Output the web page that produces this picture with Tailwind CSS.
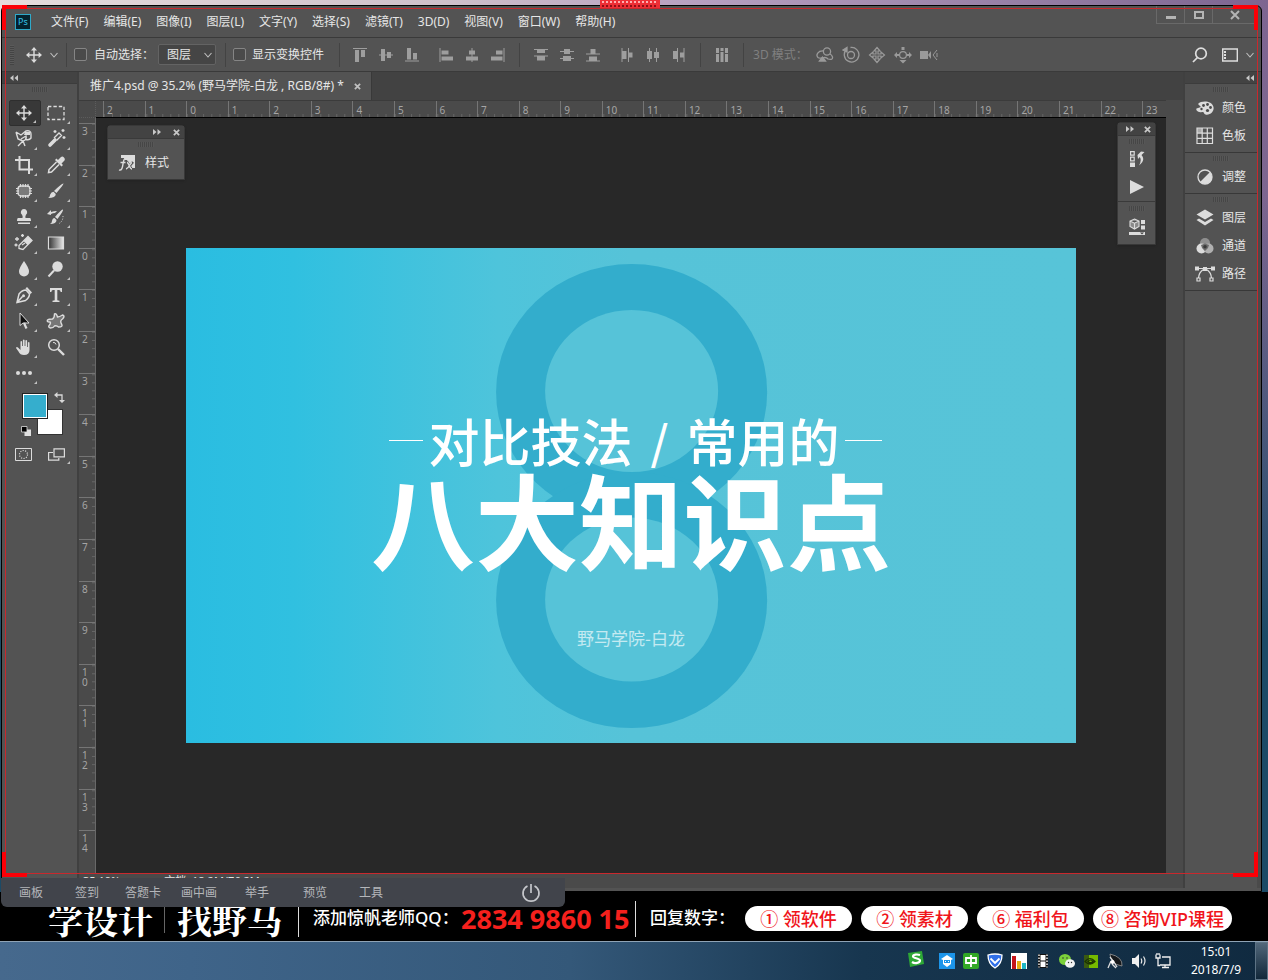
<!DOCTYPE html>
<html lang="zh-CN">
<head>
<meta charset="utf-8">
<meta name="viewport" content="width=device-width, initial-scale=1">
<title>推广4.psd</title>
<script src="https://cdn.jsdelivr.net/npm/@tailwindcss/browser@4"></script>
</head>
<body class="relative flex h-screen flex-col overflow-hidden bg-[linear-gradient(180deg,transparent_20%,#1b4a66_65%),linear-gradient(90deg,#e6dcdc_0%,#cfc0ca_35%,#b7a0c0_55%,#7d6590_100%)] font-['Noto_Sans','Noto_Sans_CJK_SC',sans-serif] text-xs text-[#e6e6e6]">

<svg class="hidden" aria-hidden="true">
  <symbol id="move" viewBox="0 0 16 16"><path fill="none" stroke="currentColor" stroke-width="1.4" d="M8 2v12M2 8h12"/><path fill="currentColor" d="M8 0l3 3.4H5zM8 16l3-3.4H5zM0 8l3.4-3v6zM16 8l-3.4-3v6z"/></symbol>
  <symbol id="chev" viewBox="0 0 8 8"><path fill="none" stroke="currentColor" stroke-width="1.1" d="M.5 2L4 6l3.500-4"/></symbol>
  <symbol id="left2" viewBox="0 0 8 6"><path fill="currentColor" d="M3.500 0v6L0 3zM8 0v6L4.500 3z"/></symbol>
  <symbol id="right2" viewBox="0 0 8 6"><path fill="currentColor" d="M0 0v6l3.500-3zM4.500 0v6L8 3z"/></symbol>
  <symbol id="x" viewBox="0 0 8 8"><path fill="none" stroke="currentColor" stroke-width="2" d="M1 1l6 6M7 1L1 7"/></symbol>
</svg>

<div class="h-[5px] shrink-0"></div>

<!-- Application window -->
<main class="mx-px mr-[6px] flex min-h-0 flex-1 flex-col rounded-t-md border border-black bg-[#535353] pb-[3px]">
  <header class="relative flex h-8 shrink-0 items-center border-b border-[#3a3a3a] pl-[13px]">
    <div class="flex h-4 w-4 items-center justify-center border border-[#2fa9c9] bg-[#04222f] text-[9px] leading-none text-[#35c3ea]">Ps</div>
    <nav class="ml-5 flex gap-[15px]">
      <button>文件(F)</button><button>编辑(E)</button><button>图像(I)</button><button>图层(L)</button><button>文字(Y)</button><button>选择(S)</button><button>滤镜(T)</button><button>3D(D)</button><button>视图(V)</button><button>窗口(W)</button><button>帮助(H)</button>
    </nav>
    <div class="ml-auto mr-1 flex h-[18px] self-start border-b border-l border-[#696969] text-[#b4b4b4]">
      <button aria-label="最小化" class="flex w-7 items-center justify-center border-r border-[#696969]"><svg class="h-3 w-3" viewBox="0 0 12 12"><path fill="currentColor" d="M1 7h10v3H1z"/></svg></button>
      <button aria-label="最大化" class="flex w-7 items-center justify-center border-r border-[#696969]"><svg class="h-3 w-3" viewBox="0 0 12 12"><path fill="none" stroke="currentColor" stroke-width="2" d="M2 3h8v6H2z"/></svg></button>
      <button aria-label="关闭" class="flex w-11 items-center justify-center"><svg class="h-3 w-3" viewBox="0 0 12 12"><path fill="none" stroke="currentColor" stroke-width="2" d="M2 2l8 8M10 2l-8 8"/></svg></button>
    </div>
  </header>

  <section class="flex h-[34px] shrink-0 items-center border-b border-[#3a3a3a]">
    <div class="ml-2 h-5 w-1 bg-[repeating-linear-gradient(0deg,#444_0_1px,#5a5a5a_1px_2px)]"></div>
    <svg class="ml-3 h-4 w-4 text-[#dcdcdc]"><use href="#move"/></svg>
    <svg class="ml-2 h-2 w-2 text-[#c0c0c0]"><use href="#chev"/></svg>
    <div class="ml-2 h-6 w-px bg-[#434343]"></div>
    <label class="ml-[7px] flex items-center"><input type="checkbox" class="mr-[7px] h-[13px] w-[13px] appearance-none rounded-xs border border-[#858585] bg-[#4a4a4a]">自动选择：</label>
    <label class="relative ml-1 flex items-center"><span class="sr-only">选择类型</span>
      <select class="h-[21px] w-[58px] appearance-none rounded-xs border border-[#636363] bg-[#454545] pl-2 leading-[19px]"><option>图层</option></select>
      <svg class="pointer-events-none absolute right-1 h-2 w-2 text-[#c0c0c0]"><use href="#chev"/></svg></label>
    <div class="ml-[9px] h-6 w-px bg-[#434343]"></div>
    <label class="ml-[7px] flex items-center"><input type="checkbox" class="mr-[6px] h-[13px] w-[13px] appearance-none rounded-xs border border-[#858585] bg-[#4a4a4a]">显示变换控件</label>
    <div class="ml-[15px] h-6 w-px bg-[#434343]"></div>

    <div class="ml-[7px] flex text-[#9e9e9e]">
      <button aria-label="顶对齐" class="flex w-[26px] justify-center"><svg class="h-[14px] w-[14px]" viewBox="0 0 14 14" fill="currentColor"><path d="M0 0h14v1H0zM2 2h4v12H2zM8 2h4v7H8z"/></svg></button>
      <button aria-label="垂直居中对齐" class="flex w-[26px] justify-center"><svg class="h-[14px] w-[14px]" viewBox="0 0 14 14" fill="currentColor"><path d="M0 6.500h14v1H0zM2 1h4v12H2zM8 4h4v6H8z"/></svg></button>
      <button aria-label="底对齐" class="flex w-[26px] justify-center"><svg class="h-[14px] w-[14px]" viewBox="0 0 14 14" fill="currentColor"><path d="M0 12.500h14v1H0zM2 0h4v11.500H2zM8 5h4v6.500H8z"/></svg></button>
    </div>
    <div class="ml-2 flex text-[#9e9e9e]">
      <button aria-label="左对齐" class="flex w-[26px] justify-center"><svg class="h-[14px] w-[14px]" viewBox="0 0 14 14" fill="currentColor"><path d="M.5 0h1v14h-1zM2.500 2.500h7v4h-7zM2.500 8.500H14v4H2.500z"/></svg></button>
      <button aria-label="水平居中对齐" class="flex w-[26px] justify-center"><svg class="h-[14px] w-[14px]" viewBox="0 0 14 14" fill="currentColor"><path d="M6.500 0h1v14h-1zM4 2.500h6v4H4zM1 8.500h12v4H1z"/></svg></button>
      <button aria-label="右对齐" class="flex w-[26px] justify-center"><svg class="h-[14px] w-[14px]" viewBox="0 0 14 14" fill="currentColor"><path d="M12.500 0h1v14h-1zM5 2.500h6.500v4H5zM0 8.500h11.500v4H0z"/></svg></button>
    </div>
    <div class="ml-2 h-6 w-px bg-[#434343]"></div>
    <div class="ml-2 flex text-[#9e9e9e]">
      <button aria-label="按顶分布" class="flex w-[26px] justify-center"><svg class="h-[14px] w-[14px]" viewBox="0 0 14 14" fill="currentColor"><path d="M0 1h14v1H0zM3 2h8v3H3zM0 7.500h14v1H0zM3 8.500h8v4H3z"/></svg></button>
      <button aria-label="垂直居中分布" class="flex w-[26px] justify-center"><svg class="h-[14px] w-[14px]" viewBox="0 0 14 14" fill="currentColor"><path d="M0 3h14v1H0zM4 1h6v5H4zM0 10h14v1H0zM3 8h8v5H3z"/></svg></button>
      <button aria-label="按底分布" class="flex w-[26px] justify-center"><svg class="h-[14px] w-[14px]" viewBox="0 0 14 14" fill="currentColor"><path d="M0 5.500h14v1H0zM4.500 1h5v4.500h-5zM0 12.500h14v1H0zM3 8.500h8v4H3z"/></svg></button>
    </div>
    <div class="ml-2 flex text-[#9e9e9e]">
      <button aria-label="按左分布" class="flex w-[26px] justify-center"><svg class="h-[14px] w-[14px]" viewBox="0 0 14 14" fill="currentColor"><path d="M1.500 0h1v14h-1zM2.500 3h4v8h-4zM8 0h1v14H8zM9 4.500h3.500v5H9z"/></svg></button>
      <button aria-label="水平居中分布" class="flex w-[26px] justify-center"><svg class="h-[14px] w-[14px]" viewBox="0 0 14 14" fill="currentColor"><path d="M3 0h1v14H3zM1 3h5v8H1zM10 0h1v14h-1zM8 4h5v6H8z"/></svg></button>
      <button aria-label="按右分布" class="flex w-[26px] justify-center"><svg class="h-[14px] w-[14px]" viewBox="0 0 14 14" fill="currentColor"><path d="M5 0h1v14H5zM1 3h4v8H1zM11.500 0h1v14h-1zM8 4.500h3.500v5H8z"/></svg></button>
    </div>
    <div class="ml-2 h-6 w-px bg-[#434343]"></div>
    <button aria-label="自动对齐图层" class="ml-2 flex w-[26px] justify-center text-[#9e9e9e]"><svg class="h-[14px] w-[14px]" viewBox="0 0 14 14" fill="currentColor"><path d="M1 0h3v5H1zM1 6h3v8H1zM5.500 0h3v3h-3zM5.500 4h3v10h-3zM10 0h3v5h-3zM10 6h3v8h-3z"/></svg></button>
    <div class="ml-2 h-6 w-px bg-[#434343]"></div>
    <span class="ml-[9px] w-[59px] whitespace-nowrap text-[#808080]">3D 模式：</span>
    <div class="flex text-[#9a9a9a]">
      <button aria-label="环绕移动 3D 相机" class="flex w-[26px] justify-center"><svg class="h-[18px] w-[18px]" viewBox="0 0 18 18" fill="none" stroke="currentColor" stroke-width="1.300"><circle cx="11" cy="5.500" r="3.600"/><path d="M7.500 5C2 4.500-.5 9 2 11.500 5 14 9 9 12 13q5 1.500 4.500-2Q16 9 14 8"/><path fill="currentColor" d="M3.500 15l3-4 3 4z"/></svg></button>
      <button aria-label="滚动 3D 相机" class="flex w-[26px] justify-center"><svg class="h-[18px] w-[18px]" viewBox="0 0 18 18" fill="none" stroke="currentColor" stroke-width="1.300"><circle cx="9" cy="9" r="3.500"/><path d="M4.500 3.500a7.300 7.300 0 1 0 4-2"/><path fill="currentColor" d="M1 4l4-2.500V6z"/></svg></button>
      <button aria-label="平移 3D 相机" class="flex w-[26px] justify-center"><svg class="h-[18px] w-[18px]" viewBox="0 0 18 18" fill="none" stroke="currentColor" stroke-width="1.200"><path d="M9 1.500L12 5h-2v3h3V6l3.500 3-3.500 3v-2h-3v3h2l-3 3.500L6 13h2v-3H5v2L1.500 9 5 6v2h3V5H6z"/></svg></button>
      <button aria-label="滑动 3D 相机" class="flex w-[26px] justify-center"><svg class="h-[18px] w-[18px]" viewBox="0 0 18 18" fill="none" stroke="currentColor" stroke-width="1.200"><circle cx="9" cy="9" r="3.400"/><path fill="currentColor" stroke="none" d="M7.500 1h3v3h-3zM9 17.500L5.500 14h7zM0 9l3-3v2h2.500v2H3v2zM18 9l-3-3v2h-2.500v2H15v2z"/></svg></button>
      <button aria-label="变焦 3D 相机" class="flex w-[26px] justify-center"><svg class="h-[18px] w-[18px]" viewBox="0 0 18 18"><path fill="currentColor" d="M0 5h8v8H0zM8 9l3-4v8z"/><path fill="none" stroke="currentColor" d="M17 4l-4 5 4 5M17 7v4"/></svg></button>
    </div>
    <div class="ml-auto flex items-center text-[#dedede]">
      <button aria-label="搜索"><svg class="h-4 w-4" viewBox="0 0 16 16" fill="none" stroke="currentColor" stroke-width="1.700"><circle cx="9" cy="6.500" r="5.300"/><path d="M5.500 10.500L1 15"/></svg></button>
      <button aria-label="工作区" class="ml-[14px]"><svg class="h-4 w-4" viewBox="0 0 16 16"><path fill="none" stroke="currentColor" stroke-width="1.400" d="M.7 2h14.600v12H.7z"/><path fill="currentColor" d="M2 4h2v2H2zM2 7h2v2H2zM2 10h2v2H2z"/></svg></button>
      <svg class="ml-2 mr-[7px] h-2 w-2 text-[#c0c0c0]"><use href="#chev"/></svg>
    </div>
  </section>

  <div class="flex min-h-0 flex-1">
    <!-- Tools -->
    <aside class="flex w-[75px] shrink-0 flex-col">
      <div class="flex h-3 shrink-0 items-center border-b border-[#3c3c3c] bg-[#434343] pl-2 text-[#c8c8c8]"><svg class="h-[6px] w-2"><use href="#left2"/></svg></div>
      <div class="flex h-4 shrink-0 justify-center pt-[3px]"><div class="h-[5px] w-4 bg-[repeating-linear-gradient(90deg,#464646_0_1px,#575757_1px_2px)]"></div></div>
      <div id="tools" class="grid grid-cols-[32px_33px] pl-[7px] text-[#dcdcdc]"></div>
      <div class="relative h-[58px]">
        <div class="absolute left-[35px] top-[23px] h-[26px] w-[26px] border border-[#333] bg-white"></div>
        <div class="absolute left-5 top-[7px] h-[26px] w-[26px] border border-[#222] bg-[#35aecd] outline-1 -outline-offset-2 outline-white"></div>
        <svg class="absolute left-[52px] top-[6px] h-[11px] w-[11px]" viewBox="0 0 11 11"><path fill="none" stroke="#d8d8d8" stroke-width="1.300" d="M2 3h6v6"/><path fill="#d8d8d8" d="M0 3l3.500-3v6zM8 11L5 8h6z"/></svg>
        <svg class="absolute left-[19px] top-[40px] h-[10px] w-[10px]" viewBox="0 0 10 10"><path fill="#e0e0e0" d="M3.500 3.500H10V10H3.500z"/><path fill="#000" stroke="#ddd" stroke-width=".8" d="M.5 .5h5.500v5.500H.5z"/></svg>
      </div>
      <div class="grid grid-cols-[32px_33px] pl-[7px] text-[#dcdcdc]">
        <button aria-label="快速蒙版" class="flex h-5 items-center pl-[6px]"><svg class="h-[13px] w-[17px]" viewBox="0 0 17 13" fill="none" stroke="currentColor"><path d="M.5 .5h16v12H.5z"/><circle cx="8.500" cy="6.500" r="4" stroke-dasharray="1.100 1.400" stroke-width="1.200"/></svg></button>
        <button aria-label="屏幕模式" class="relative flex h-5 items-center pl-[7px]"><svg class="h-[13px] w-[17px]" viewBox="0 0 17 13" fill="none" stroke="currentColor" stroke-width="1.200"><path d="M6 .8h10.400v8H6zM5 4.500H.6v7.700h10.200V10"/></svg><span class="absolute bottom-0 right-1 h-[3px] w-[3px] bg-[#c0c0c0] [clip-path:polygon(100%_0,100%_100%,0_100%)]"></span></button>
      </div>
    </aside>

    <!-- Document -->
    <section class="flex min-w-0 flex-1 flex-col border-x-2 border-[#404040]">
      <div class="flex h-7 shrink-0 bg-[#424242]">
        <div class="flex items-center border-r border-[#393939] bg-[#535353] pl-[11px] pr-[10px]">推广4.psd @ 35.2% (野马学院-白龙 , RGB/8#) *<button aria-label="关闭文档" class="ml-[10px] text-[#c0c0c0]"><svg class="h-[7px] w-[7px]"><use href="#x"/></svg></button></div>
      </div>
      <div class="flex min-h-0 flex-1">
        <div class="flex min-w-0 flex-1 flex-col">
          <div class="flex h-[18px] shrink-0 border-t border-[#3b3b3b] bg-[#4a4a4a] text-[10px] text-[#a5a5a5]">
            <div class="w-[17px] shrink-0 border-b border-r border-dotted border-[#5c5c5c]"></div>
            <div id="hruler" class="flex min-w-0 flex-1 border-b border-black pl-[7px]"></div>
          </div>
          <div class="flex min-h-0 flex-1">
            <div id="vruler" class="flex w-[17px] shrink-0 flex-col overflow-hidden border-r border-[#686868] bg-[#4a4a4a] pt-[5px] text-[10px] text-[#a5a5a5]"></div>
            <div class="relative flex min-w-0 flex-1 items-center justify-center bg-[#282828]">
              <!-- Artboard -->
              <div class="relative flex aspect-[890/494] w-[83.2%] flex-col items-center bg-[linear-gradient(90deg,#2abde1_0%,#30c0e0_12%,#4ec4db_35%,#56c3d8_50%,#57c4d8_100%)] text-white">
                <svg class="absolute inset-0 h-full w-full" viewBox="0 0 890 494">
                  <g fill="#33adcc"><ellipse cx="445.500" cy="144" rx="135.500" ry="128"/><ellipse cx="445.500" cy="352" rx="135.500" ry="128"/></g>
                  <g fill="#56c3d8"><ellipse cx="445.500" cy="143" rx="86.500" ry="81"/><ellipse cx="445.500" cy="351.500" rx="86.500" ry="82"/></g>
                </svg>
                <div class="relative mt-[162px] flex h-[60px] items-center pl-[9px] text-[51px] leading-none font-medium font-['Noto_Sans_CJK_SC',sans-serif]">
                  <span class="mr-[6px] h-px w-[34px] bg-white"></span><span>对比技法</span><span class="mx-[18px] text-[46px]">/</span><span>常用的</span><span class="ml-[6px] h-px w-[37px] bg-white"></span>
                </div>
                <h1 class="relative whitespace-nowrap text-[104px] leading-[96px] font-bold font-['Noto_Sans_CJK_SC',sans-serif]">八大知识点</h1>
                <p class="relative mt-[60px] text-[17px] leading-6 text-white/65 font-['Noto_Sans_CJK_SC',sans-serif]">野马学院-白龙</p>
              </div>

              <div class="absolute left-[11px] top-[7px] w-[78px] rounded-t border border-[#383838] bg-[#535353] shadow">
                <div class="flex h-[13px] items-center justify-end gap-3 border-b border-[#3a3a3a] bg-[#434343] pr-1 text-[#c8c8c8]"><svg class="h-[6px] w-2"><use href="#right2"/></svg><button aria-label="关闭样式"><svg class="h-[7px] w-[7px]"><use href="#x"/></svg></button></div>
                <div class="flex justify-center pt-[3px]"><div class="h-[5px] w-4 bg-[repeating-linear-gradient(90deg,#464646_0_1px,#575757_1px_2px)]"></div></div>
                <button class="flex h-8 w-full items-center gap-[9px] pl-[10px]"><svg class="h-[18px] w-[18px]" viewBox="0 0 18 18"><path fill="#dcdcdc" d="M3 1h14v13h-3l-3-4-2-4H7L6 4H3z"/><path fill="none" stroke="#535353" stroke-width="2.600" d="M9 8l5 8M15 8l-7 8"/><path fill="none" stroke="#dcdcdc" stroke-width="1.400" d="M8.500 5C6 3.500 5.500 7 5 10s-1 7-4 6M2.500 8.500h5M9 8.500c2 0 2.500 6.500 5 6.500M14 8.500c-2 .5-3 6-6 6.500"/></svg>样式</button>
              </div>

              <div class="absolute right-[10px] top-1 w-[39px] rounded-t border border-[#383838] bg-[#535353] text-[#dcdcdc] shadow">
                <div class="flex h-[13px] items-center justify-end gap-[10px] border-b border-[#3a3a3a] bg-[#434343] pr-1 text-[#c8c8c8]"><svg class="h-[6px] w-2"><use href="#right2"/></svg><button aria-label="关闭面板"><svg class="h-[7px] w-[7px]"><use href="#x"/></svg></button></div>
                <div class="flex h-[9px] justify-center pt-[3px]"><div class="h-[5px] w-4 bg-[repeating-linear-gradient(90deg,#464646_0_1px,#575757_1px_2px)]"></div></div>
                <button aria-label="历史记录" class="flex h-7 w-full items-center justify-center"><svg class="h-[18px] w-4" viewBox="0 0 16 18"><path fill="none" stroke="currentColor" stroke-width="1.200" d="M1.600 1.600h3.600v3.600H1.600zM1.600 7.200h3.600v3.600H1.600z"/><path fill="currentColor" d="M1 12.500h5V17H1zM8.500 5L12 1.500 15.500 2 14 3.500 12.500 5q4.500 5-2.500 10.500Q13 10 10.800 7L9 9z"/></svg></button>
                <button aria-label="动作" class="flex h-7 w-full items-center justify-center"><svg class="h-[14px] w-[14px]" viewBox="0 0 14 14"><path fill="currentColor" d="M0 0l14 7-14 7z"/></svg></button>
                <div class="flex h-[13px] justify-center border-t border-[#3a3a3a] pt-1"><div class="h-[5px] w-4 bg-[repeating-linear-gradient(90deg,#464646_0_1px,#575757_1px_2px)]"></div></div>
                <button aria-label="属性" class="flex h-[30px] w-full items-center justify-center pb-1"><svg class="h-[18px] w-4" viewBox="0 0 16 18"><path fill="#8a8a8a" stroke="currentColor" stroke-width="1.100" d="M5.500 1L10 3v5.500l-4.500 2.500L1 8.500V3zM1 3l4.500 2.200L10 3M5.500 5.200V11"/><path fill="currentColor" d="M12 2h4v4h-4zM12 7.500h4v4h-4zM0 14h16v3H0z"/><path fill="#444" d="M11 14.500h4l-2 2z"/></svg></button>
              </div>
            </div>
          </div>
          <div class="flex h-[15px] shrink-0 gap-[44px] overflow-hidden bg-[#4a4a4a] pl-1 text-[11px] leading-4"><span>35.19%</span><span>文档: 18.2M/76.2M</span></div>
        </div>
        <div class="w-[17px] shrink-0 bg-[#4a4a4a]"></div>
      </div>
    </section>

    <!-- Collapsed panels -->
    <aside class="flex w-[76px] shrink-0 flex-col border-r-4 border-[#4a4a4a]">
      <div class="flex h-3 shrink-0 items-center justify-end border-b border-[#3c3c3c] bg-[#434343] pr-[3px] text-[#c8c8c8]"><svg class="h-[6px] w-2"><use href="#left2"/></svg></div>
      <div class="flex flex-col border-b border-[#383838] pb-[2px]">
        <div class="flex h-[10px] justify-center pt-[3px]"><div class="h-[5px] w-4 bg-[repeating-linear-gradient(90deg,#464646_0_1px,#575757_1px_2px)]"></div></div>
        <button class="flex h-7 items-center gap-[7px] pl-[10px]"><svg class="h-5 w-5" viewBox="0 0 20 20"><path fill="#dcdcdc" d="M3 6c4-4 14-3 15.500 3 1 5-4 8.500-8 7.500-2-.5-1-3-3.500-2.500-4 1-6.500-2-5.500-3.500L6 9z"/><g fill="#4a4a4a"><circle cx="8.500" cy="7.500" r="1.400"/><circle cx="12.500" cy="6.500" r="1.400"/><circle cx="15.500" cy="9.500" r="1.400"/><circle cx="12.500" cy="12.500" r="1.600"/><circle cx="6.500" cy="11" r="1.200"/></g></svg>颜色</button>
        <button class="flex h-7 items-center gap-[7px] pl-[10px]"><svg class="h-5 w-5" viewBox="0 0 20 20"><path fill="#aaa" d="M2 2h5v5H2z"/><path fill="none" stroke="#dcdcdc" stroke-width="1.200" d="M2 2h15.500v15.500H2zM7.200 2v15.500M12.300 2v15.500M2 7.200h15.500M2 12.300h15.500"/></svg>色板</button>
      </div>
      <div class="flex flex-col border-b border-[#383838] pb-[2px]">
        <div class="flex h-[10px] justify-center pt-[3px]"><div class="h-[5px] w-4 bg-[repeating-linear-gradient(90deg,#464646_0_1px,#575757_1px_2px)]"></div></div>
        <button class="flex h-7 items-center gap-[7px] pl-[10px]"><svg class="h-5 w-5" viewBox="0 0 20 20"><circle cx="10" cy="10" r="7" fill="none" stroke="#dcdcdc" stroke-width="1.300"/><path fill="#dcdcdc" d="M15 5a7 7 0 0 1-10 10z"/></svg>调整</button>
      </div>
      <div class="flex flex-col border-b border-[#383838] pb-[2px]">
        <div class="flex h-[10px] justify-center pt-[3px]"><div class="h-[5px] w-4 bg-[repeating-linear-gradient(90deg,#464646_0_1px,#575757_1px_2px)]"></div></div>
        <button class="flex h-7 items-center gap-[7px] pl-[10px]"><svg class="h-5 w-5" viewBox="0 0 20 20" fill="#dcdcdc"><path d="M10 1.500l8.500 5-8.500 5-8.500-5zM4 10.500l6 3.500 6-3.500 2.500 1.500-8.500 5.500L1.500 12z"/></svg>图层</button>
        <button class="flex h-7 items-center gap-[7px] pl-[10px]"><svg class="h-5 w-5" viewBox="0 0 20 20"><circle cx="10" cy="7" r="5" fill="#8f8f8f"/><circle cx="6.500" cy="12.500" r="5" fill="#dcdcdc"/><circle cx="13.500" cy="12.500" r="5" fill="#b0b0b0"/><path fill="#6c6c6c" d="M6 9l4-1.500L14 9l-1 3-3 3-3-3z"/><circle cx="10" cy="10.800" r="1.800" fill="#3a3a3a"/></svg>通道</button>
        <button class="flex h-7 items-center gap-[7px] pl-[10px]"><svg class="h-5 w-5" viewBox="0 0 20 20"><path fill="none" stroke="#dcdcdc" stroke-width="1.200" d="M1 4.500h18M8.500 5.500Q4 8 3.500 14M11.500 5.500Q16 8 16.500 14M2 14h3v3H2zM15 14h3v3h-3z"/><path fill="#dcdcdc" d="M0 2.500h4v4H0zM16 2.500h4v4h-4zM8 3h4v4H8z"/></svg>路径</button>
      </div>
    </aside>
  </div>
</main>

<!-- Advertising banner -->
<section class="relative flex h-[49px] shrink-0 items-center whitespace-nowrap bg-black pt-1 text-white">
  <span class="ml-12 w-[105px] text-[35px] leading-[46px] font-bold font-['Noto_Serif_CJK_SC','Noto_Sans_CJK_SC',serif]">学设计</span>
  <span class="ml-[11px] h-7 w-px bg-[#666]"></span>
  <span class="ml-3 w-[105px] text-[35px] leading-[46px] font-bold font-['Noto_Serif_CJK_SC','Noto_Sans_CJK_SC',serif]">找野马</span>
  <span class="ml-[16px] h-9 w-px bg-[#ddd]"></span>
  <span class="ml-[14px] w-[148px] text-[17px] font-medium">添加惊帆老师QQ：</span>
  <span class="w-[172px] text-[27px] leading-8 font-bold text-[#f5201d]">2834 9860 15</span>
  <span class="ml-[2px] h-9 w-px bg-[#ddd]"></span>
  <span class="ml-[14px] w-[95px] text-[17px] font-medium">回复数字：</span>
  <div class="flex gap-[9px] text-[18px] font-medium text-[#f0141a]">
    <a href="#r1" class="flex h-[25px] w-[107px] items-center justify-center rounded-full bg-white">① 领软件</a>
    <a href="#r2" class="flex h-[25px] w-[107px] items-center justify-center rounded-full bg-white">② 领素材</a>
    <a href="#r6" class="flex h-[25px] w-[107px] items-center justify-center rounded-full bg-white">⑥ 福利包</a>
    <a href="#r8" class="flex h-[25px] w-[139px] items-center justify-center rounded-full bg-white">⑧ 咨询VIP课程</a>
  </div>

  <!-- Lesson toolbar that floats over the window edge -->
  <div class="absolute -top-[14px] left-px flex h-[29px] w-[564px] items-center rounded-b-md bg-[#41444b] pl-[18px] pr-[24px] text-[#b4b6ba]">
    <button class="w-14 text-left">画板</button><button class="w-[50px] text-left">签到</button><button class="w-14 text-left">答题卡</button><button class="w-16 text-left">画中画</button><button class="w-[58px] text-left">举手</button><button class="w-14 text-left">预览</button><button class="text-left">工具</button>
    <button aria-label="下课" class="ml-auto"><svg class="h-5 w-5" viewBox="0 0 20 20" fill="none" stroke="#c4c6ca" stroke-width="1.700"><path d="M6.500 3A8 8 0 1 0 13.500 3M10 1v9"/></svg></button>
  </div>
</section>

<!-- Taskbar -->
<footer class="flex h-[39px] shrink-0 items-center border-t border-[#8fa3b5] bg-[linear-gradient(90deg,#46698d_0%,#3f6489_15%,#345879_45%,#17364f_68%,#102a40_100%)]">
  <div class="ml-auto flex items-center gap-2">
    <svg class="mr-[7px] mb-1 h-4 w-4" viewBox="0 0 16 16"><path fill="#2ea836" d="M0 2l14-2 2 13-14 3z"/><path fill="none" stroke="#fff" stroke-width="2.200" d="M12 4c-3-1-7-.5-7 1.500S12 7 12 9.500 7 13 4 11"/></svg>
    <svg class="h-4 w-4" viewBox="0 0 16 16"><path fill="#1c95ea" d="M0 0h16v16H0z"/><path fill="#fff" d="M8 2l6 4-2 1v4l-4 3-4-3V7L2 6z"/><path fill="#1c95ea" d="M5 7h6v3H5z"/><path fill="#fff" d="M6 8h1v1H6zM9 8h1v1H9z"/></svg>
    <svg class="h-4 w-4" viewBox="0 0 16 16"><rect width="16" height="16" rx="2" fill="#31a825"/><path fill="none" stroke="#fff" stroke-width="1.800" d="M3 5h10v5H3zM8 2v12"/></svg>
    <svg class="h-4 w-4" viewBox="0 0 16 16"><path fill="#2f6fe8" stroke="#fff" stroke-width="1.300" d="M1 2q7-2 14 0 0 9-7 13Q1 11 1 2z"/><path fill="none" stroke="#fff" stroke-width="1.800" d="M3.500 5.500L8 10l4.500-4.500"/></svg>
    <svg class="h-4 w-4" viewBox="0 0 16 16"><path fill="#fff" d="M0 0h16v16H0z"/><path fill="#c4161c" d="M1 3h4v13H1z"/><path fill="#e8b014" d="M6 8h4v8H6z"/><path fill="#1fb7c4" d="M11 10h4v6h-4z"/></svg>
    <svg class="h-4 w-4" viewBox="0 0 16 16"><path fill="#111" d="M3 1h10v14H3z"/><path fill="#fff" d="M5.500 2h5v5.500h-5zM5.500 8.500h5V14h-5z"/><path stroke="#fff" stroke-width="1.400" stroke-dasharray="1.600 1.400" d="M4 1.500v13M12 1.500v13"/></svg>
    <svg class="h-4 w-4" viewBox="0 0 16 16"><ellipse cx="6" cy="6.500" rx="6" ry="5.500" fill="#7bd03a"/><ellipse cx="11" cy="10.500" rx="5" ry="4.300" fill="#f2f2f2"/><g fill="#333"><circle cx="4" cy="5" r=".8"/><circle cx="8" cy="5" r=".8"/><circle cx="9.500" cy="9.500" r=".7"/><circle cx="12.500" cy="9.500" r=".7"/></g></svg>
    <svg class="h-4 w-4" viewBox="0 0 16 16"><path fill="#3a5a10" d="M1 2h14v13H1z"/><path fill="#76b900" d="M6 2h9v13H6z"/><path fill="none" stroke="#1c3300" stroke-width="1.200" d="M2 8.500q5-6 10 0-5 5-10 0zM5 8.500q2.500-3 5 0-2.500 2.500-5 0z"/></svg>
    <svg class="h-4 w-4" viewBox="0 0 16 16"><path fill="#15181b" stroke="#999" stroke-width=".8" d="M3 1q0 10 12 12Q16 4 3 1z"/><path fill="none" stroke="#ddd" stroke-width="1.300" d="M4 8l-3 7M3 4l4 5 3 5M5 11l4 4"/><circle cx="5.500" cy="9" r="2" fill="#fff"/></svg>
    <svg class="h-4 w-4" viewBox="0 0 16 16"><path fill="#f0f0f0" d="M1 5h3l4-4v14l-4-4H1z"/><path fill="none" stroke="#e8e8e8" stroke-width="1.200" d="M10 5.500q1.500 2.500 0 5M12.500 3.500q3 4.500 0 9"/></svg>
    <svg class="h-4 w-4" viewBox="0 0 16 16" fill="none" stroke="#f0f0f0" stroke-width="1.300"><path d="M7 4h8v8H5M10 12v2.500M7 14.500h7M1 1.500v3.500h4V1.500M3 5v7.500h2M2 0v2M4 0v2"/></svg>
  </div>
  <div class="ml-[19px] w-[52px] text-center text-xs leading-[18px] whitespace-nowrap text-white">15:01<br>2018/7/9</div>
  <button aria-label="显示桌面" class="ml-[13px] h-full w-[13px] border border-[#5d7385] bg-linear-to-b from-[#51677a] to-[#12283a]"></button>
</footer>

<!-- Screen-share frame -->
<div class="pointer-events-none absolute top-2 right-[10px] bottom-[106px] left-[5px] border border-[#c9282d]"></div>
<div class="pointer-events-none absolute top-[5px] left-[2px] h-[25px] w-[25px] border-t-4 border-l-4 border-[#fb0007]"></div>
<div class="pointer-events-none absolute top-[5px] right-[10px] h-[25px] w-[25px] border-t-4 border-r-4 border-[#fb0007]"></div>
<div class="pointer-events-none absolute bottom-[103px] left-[2px] h-[25px] w-[25px] border-b-4 border-l-4 border-[#fb0007]"></div>
<div class="pointer-events-none absolute right-[10px] bottom-[103px] h-[25px] w-[25px] border-r-4 border-b-4 border-[#fb0007]"></div>
<div class="absolute top-0 left-[600px] h-2 w-[60px] bg-[#ee2f35]"><div class="mx-[2px] mt-px h-[2px] bg-[repeating-linear-gradient(90deg,#ffb0b0_0_2px,transparent_2px_4px)]"></div><div class="mx-[2px] mt-[2px] h-[2px] bg-[repeating-linear-gradient(90deg,#8d1015_0_2px,transparent_2px_4px)]"></div></div>

<script>
  const tools = [
    ['移动', '<path fill="none" stroke="currentColor" stroke-width="1.400" d="M10 4v12M4 10h12"/><path fill="currentColor" d="M10 2l3 3.400H7zM10 18l3-3.400H7zM2 10l3.400-3v6zM18 10l-3.400-3v6z"/>'],
    ['矩形选框', '<path fill="none" stroke="currentColor" stroke-width="1.300" stroke-dasharray="3.400 2" d="M2 3.500h16v13H2z"/>'],
    ['套索', '<g fill="none" stroke="currentColor" stroke-width="1.400"><path d="M2 3l5 3 5-4q5-1 5 3v4q-2 3-6 1M2 3l2 7 5 2-5 5M9 12q4-1 3-5L7 10M9 12l2 5"/></g><path fill="currentColor" d="M11 3l5 0v3h-6z"/>'],
    ['魔棒', '<path stroke="currentColor" stroke-width="3.600" stroke-linecap="round" d="M4 16l5-5"/><path fill="none" stroke="currentColor" stroke-width="1.300" d="M8 9l5-5 2.500 2.500-5 5M9 1v3M7.500 2.500h3M17 0v3M15.500 1.500h3M18 7v3M16.500 8.500h3"/>'],
    ['裁剪', '<path fill="none" stroke="currentColor" stroke-width="2" d="M1 5h14v10M5.500 1v13.500H19M15 15v4"/>'],
    ['吸管', '<path fill="none" stroke="currentColor" stroke-width="1.500" d="M10.500 7L3 14.500 2.500 17.500 5.500 17l7.500-7.500"/><path fill="currentColor" d="M9 5l1.500-1.500L12 5l3-3q1.500-1 3 .5t.5 3l-3 3L17 10l-1.500 1.500z"/>'],
    ['修补', '<rect x="4" y="5" width="12" height="10" rx="3" fill="#7a7a7a" stroke="currentColor" stroke-width="1.300"/><path stroke="currentColor" stroke-width="1.200" d="M6.500 3v3M9 3v3M11.500 3v3M14 3v3M6.500 14v3M9 14v3M11.500 14v3M14 14v3M2 7.500h3M2 10h3M2 12.500h3M15 7.500h3M15 10h3M15 12.500h3"/>'],
    ['画笔', '<path fill="currentColor" d="M17.500 2.500Q18 3 10.500 12L8 10Q16 2 17.500 2.500zM7.500 10.800l2.300 2.200q0 4-7.800 4 2-1 2.200-3.500 1-2.700 3.300-2.700z"/>'],
    ['仿制图章', '<path fill="currentColor" d="M10 2a3.200 3.200 0 0 1 2 5.700q-1 1.300-.5 3.300H16q1 0 1 3H3q0-3 1-3h4.500q.5-2-.5-3.300A3.200 3.200 0 0 1 10 2zM4 15.500h12V17H4z"/>'],
    ['历史记录画笔', '<path fill="currentColor" d="M17 2.500Q18 3 11.500 12L9 10Q15.500 2 17 2.500zM8.500 11l2 2q0 4-6.500 4 2-1 2-3 .5-3 2.500-3zM1 7l4-4v2q3-1 6-1L9 6Q7 6 5 7v1z"/><path fill="none" stroke="currentColor" stroke-dasharray="1 1.500" d="M17 9q0 6-5 8"/>'],
    ['橡皮擦', '<path fill="currentColor" d="M14 3.500l4 4-4.500 4.500L9.500 8z"/><path fill="none" stroke="currentColor" stroke-width="1.300" d="M14 3.500l4 4-9 9-4-1v-3zM8 12l3-2M3 4v4M1 6h4M8.500 1v3M7 2.500h3M2 10.500v3M.5 12h3"/>'],
    ['渐变', '<defs><linearGradient id="g"><stop stop-color="#333"/><stop offset="1" stop-color="#e8e8e8"/></linearGradient></defs><path fill="url(#g)" stroke="currentColor" stroke-width="1.200" d="M2.500 4h15v12h-15z"/>'],
    ['模糊', '<path fill="currentColor" d="M10 2q5 7 5 10.500a5 5 0 0 1-10 0Q5 9 10 2z"/>'],
    ['减淡', '<circle cx="11.500" cy="7.500" r="5.200" fill="currentColor"/><path stroke="currentColor" stroke-width="2" d="M8 11.500l-5.500 6"/>'],
    ['钢笔', '<path fill="none" stroke="currentColor" stroke-width="1.500" d="M3 17.500L5 9q3-4 7-4l3.500 4q0 3.500-4 6.500zM3 17.500l5.500-6"/><circle cx="9.500" cy="10.700" r="1.500" fill="currentColor"/><path fill="currentColor" d="M11.500 3.500l1.500-1.500 5 5.500-1.500 1.500z"/>'],
    ['文字', '<path fill="currentColor" d="M4 3h12v4h-1.300Q14.500 5 13 5h-1.700v10.200l2.200.5V17h-7v-1.300l2.200-.5V5H7Q5.500 5 5.300 7H4z"/>'],
    ['路径选择', '<path fill="#111" stroke="currentColor" stroke-width="1" d="M6 2v12.500l3-2.500h6z"/><path stroke="currentColor" stroke-width="2.200" d="M10 12l2.500 5.500"/>'],
    ['自定形状', '<path fill="#777" stroke="currentColor" stroke-width="1.400" d="M8.500 3q2-1 3 3 2 0 5-2 3 1 0 4-3 2-1 5t-3 3q-2-2-4-1-1 2-4 2-3-1-1-3 2-3 0-3-3 0-2-2 1-1 5-1 2-1 2-5z"/>'],
    ['抓手', '<path fill="currentColor" d="M6.500 10V4.500q.8-1 1.600 0V9h.8V3q.8-1 1.700 0v6h.8V3.500q.8-1 1.700 0V10h.8V5.500q.8-1 1.600 0V13q0 5-5.500 5-4 0-5.500-3.500L2 11q.5-1.500 2-.5L6.500 13z"/>'],
    ['缩放', '<circle cx="8" cy="8" r="5.300" fill="none" stroke="currentColor" stroke-width="1.500"/><path stroke="currentColor" stroke-width="2.400" d="M12 12l6 6"/><path fill="none" stroke="currentColor" d="M7 5.500q2.500-.5 3 2"/>'],
    ['编辑工具栏', '<g fill="currentColor"><circle cx="4" cy="10" r="2"/><circle cx="10" cy="10" r="2"/><circle cx="16" cy="10" r="2"/></g>']
  ];
  document.getElementById('tools').innerHTML = tools.map(([name, art], i) => `
    <button aria-label="${name}" class="${i ? 'relative flex h-[26px] items-center pl-[5px]' : 'relative flex h-[26px] items-center rounded-xs border border-[#2e2e2e] bg-[#383838] pl-1'}">
      <svg class="h-5 w-5" viewBox="0 0 20 20">${art}</svg>
      ${name === '缩放' ? '' : '<span class="absolute right-1 bottom-[2px] h-[3px] w-[3px] bg-[#c0c0c0] [clip-path:polygon(100%_0,100%_100%,0_100%)]"></span>'}
    </button>`).join('');

  const units = (from, to) => Array.from({ length: to - from + 1 }, (_, i) => Math.abs(from + i));
  document.getElementById('hruler').innerHTML = units(-2, 22).map(n => `
    <div class="min-w-0 flex-1 border-l border-[#757575] bg-[linear-gradient(90deg,#666_1px,transparent_1px)] bg-size-[20%_3px] bg-bottom bg-repeat-x pl-[3px] leading-[18px]">${n}</div>`).join('') +
    '<div class="w-6 shrink-0 border-l border-[#757575] pl-[3px] leading-[18px]">23</div>';
  document.getElementById('vruler').innerHTML = units(-3, 13).map(n => `
    <div class="min-h-0 flex-1 border-t border-[#757575] bg-[linear-gradient(#666_1px,transparent_1px)] bg-size-[3px_20%] bg-right bg-repeat-y pt-[2px] pl-[3px] leading-[10px]">${String(n).split('').join('<br>')}</div>`).join('') +
    '<div class="h-[43px] shrink-0 border-t border-[#757575] pt-[2px] pl-[3px] leading-[10px]">1<br>4</div>';
</script>
</body>
</html>
